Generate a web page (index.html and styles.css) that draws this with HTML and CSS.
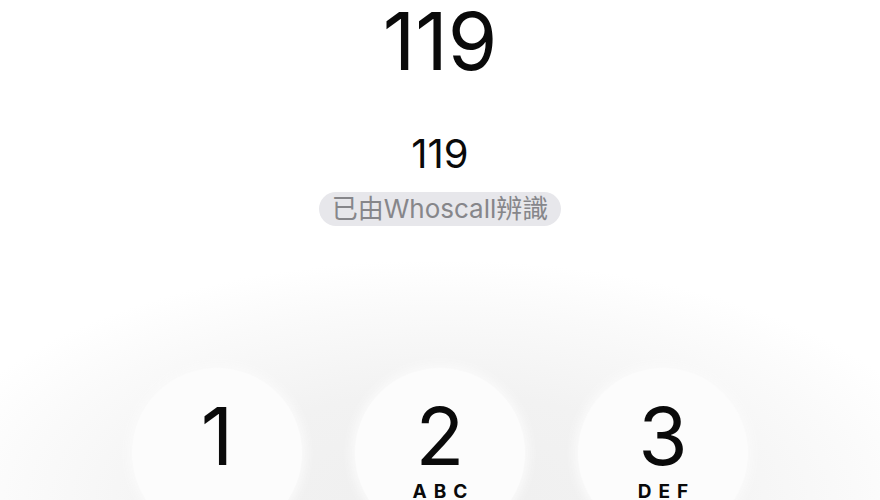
FILE: index.html
```html
<!DOCTYPE html>
<html lang="zh-Hant">
<head>
    <meta charset="UTF-8">
    <meta name="viewport" content="width=device-width, initial-scale=1.0">
    <title>Call</title>
    <link rel="stylesheet" href="styles.css">
</head>
<body>
    <div class="call-screen">
        <div class="dialed">119</div>
        <div class="caller">
            <div class="caller-name">119</div>
            <div class="caller-tag">已由Whoscall辨識</div>
        </div>
        <div class="keypad">
            <div class="key"><span class="digit">1</span></div>
            <div class="key"><span class="digit">2</span><span class="letters">ABC</span></div>
            <div class="key"><span class="digit">3</span><span class="letters">DEF</span></div>
        </div>
    </div>
</body>
</html>
```

FILE: styles.css
```css
html, body {
    margin: 0;
    height: 100%;
}

body {
    font-family: Inter, "Noto Sans CJK TC", sans-serif;
    color: #0a0a0a;
    background: radial-gradient(ellipse 520px 240px at 440px 500px, #efefef 0, #f2f2f2 45%, #fafafa 80%, #ffffff 100%) #ffffff;
    overflow: hidden;
}

.call-screen {
    display: flex;
    flex-direction: column;
    align-items: center;
}

.dialed {
    font-size: 80px;
    line-height: 80px;
    margin-top: 1px;
}

.caller {
    display: flex;
    flex-direction: column;
    align-items: center;
    margin-top: 53px;
}

.caller-name {
    font-size: 40px;
    line-height: 1;
}

.caller-tag {
    margin-top: 18px;
    background: #e7e7eb;
    color: #86868a;
    font-size: 26px;
    line-height: 34px;
    padding: 0 13px;
    border-radius: 17px;
}

.keypad {
    display: flex;
    gap: 53px;
    margin-top: 142px;
}

.key {
    width: 170px;
    height: 170px;
    border-radius: 50%;
    background: #fcfcfc;
    box-shadow: 0 0 10px 4px #fafafa;
    display: flex;
    flex-direction: column;
    align-items: center;
}

.digit {
    font-size: 80px;
    line-height: 1;
    margin-top: 28px;
}

.letters {
    font-size: 19px;
    font-weight: 700;
    letter-spacing: 7px;
    margin-right: -7px;
    line-height: 1;
    margin-top: 6px;
}
```
